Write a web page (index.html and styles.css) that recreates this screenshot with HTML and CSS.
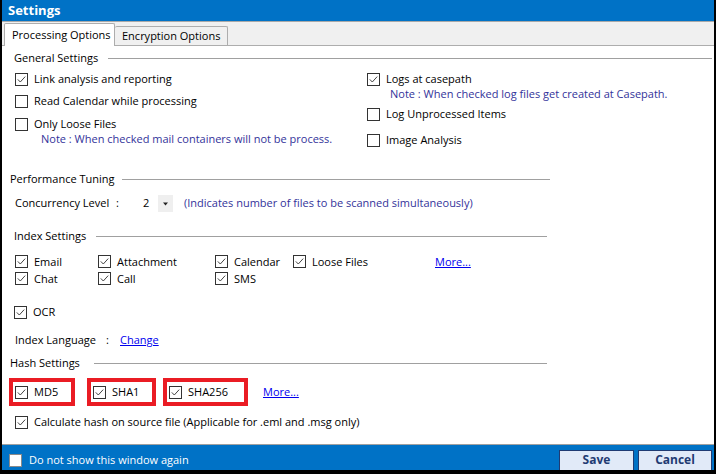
FILE: index.html
```html
<!DOCTYPE html>
<html>
<head>
<meta charset="utf-8">
<link rel="stylesheet" href="styles.css">
</head>
<body>
<div class="window">
  <div class="titlebar">Settings</div>
  <div class="tabs">
    <div class="tab active">Processing Options</div>
    <div class="tab">Encryption Options</div>
  </div>
  <div class="content">
    <div class="legend legend-general"><span>General Settings</span><i class="rule"></i></div>
    <div class="general">
      <div class="col col-left">
        <div class="row r1"><svg class="cb" viewBox="0 0 13 13"><rect x="0.5" y="0.5" width="12" height="12" fill="#fff" stroke="#333"/><path d="M2.8 6.4 L5.3 9 L10.2 3.6" fill="none" stroke="#444" stroke-width="1"/></svg><span>Link analysis and reporting</span></div>
        <div class="row r2"><svg class="cb" viewBox="0 0 13 13"><rect x="0.5" y="0.5" width="12" height="12" fill="#fff" stroke="#333"/></svg><span>Read Calendar while processing</span></div>
        <div class="row r3"><svg class="cb" viewBox="0 0 13 13"><rect x="0.5" y="0.5" width="12" height="12" fill="#fff" stroke="#333"/></svg><span>Only Loose Files</span></div>
        <div class="note note-left">Note : When checked mail containers will not be process.</div>
      </div>
      <div class="col col-right">
        <div class="row r1"><svg class="cb" viewBox="0 0 13 13"><rect x="0.5" y="0.5" width="12" height="12" fill="#fff" stroke="#333"/><path d="M2.8 6.4 L5.3 9 L10.2 3.6" fill="none" stroke="#444" stroke-width="1"/></svg><span>Logs at casepath</span></div>
        <div class="note note-right">Note : When checked log files get created at Casepath.</div>
        <div class="row rr2"><svg class="cb" viewBox="0 0 13 13"><rect x="0.5" y="0.5" width="12" height="12" fill="#fff" stroke="#333"/></svg><span>Log Unprocessed Items</span></div>
        <div class="row rr3"><svg class="cb" viewBox="0 0 13 13"><rect x="0.5" y="0.5" width="12" height="12" fill="#fff" stroke="#333"/></svg><span>Image Analysis</span></div>
      </div>
    </div>

    <div class="legend legend-perf short"><span>Performance Tuning</span><i class="rule"></i></div>
    <div class="row concurrency">
      <span class="cc-label">Concurrency Level</span><span class="cc-colon">:</span>
      <span class="cc-value">2</span>
      <span class="dropdown"><svg viewBox="0 0 15 17" width="15" height="17"><path d="M5 7.5 L10 7.5 L7.5 10.5 Z" fill="#222"/></svg></span>
      <span class="hint">(Indicates number of files to be scanned simultaneously)</span>
    </div>

    <div class="legend legend-index short"><span>Index Settings</span><i class="rule"></i></div>
    <div class="index-grid">
      <div class="row"><svg class="cb" viewBox="0 0 13 13"><rect x="0.5" y="0.5" width="12" height="12" fill="#fff" stroke="#333"/><path d="M2.8 6.4 L5.3 9 L10.2 3.6" fill="none" stroke="#444" stroke-width="1"/></svg><span>Email</span></div>
      <div class="row"><svg class="cb" viewBox="0 0 13 13"><rect x="0.5" y="0.5" width="12" height="12" fill="#fff" stroke="#333"/><path d="M2.8 6.4 L5.3 9 L10.2 3.6" fill="none" stroke="#444" stroke-width="1"/></svg><span>Attachment</span></div>
      <div class="row"><svg class="cb" viewBox="0 0 13 13"><rect x="0.5" y="0.5" width="12" height="12" fill="#fff" stroke="#333"/><path d="M2.8 6.4 L5.3 9 L10.2 3.6" fill="none" stroke="#444" stroke-width="1"/></svg><span>Calendar</span></div>
      <div class="row"><svg class="cb" viewBox="0 0 13 13"><rect x="0.5" y="0.5" width="12" height="12" fill="#fff" stroke="#333"/><path d="M2.8 6.4 L5.3 9 L10.2 3.6" fill="none" stroke="#444" stroke-width="1"/></svg><span>Loose Files</span></div>
      <div class="row"><a class="link" href="#">More...</a></div>
      <div class="row"><svg class="cb" viewBox="0 0 13 13"><rect x="0.5" y="0.5" width="12" height="12" fill="#fff" stroke="#333"/><path d="M2.8 6.4 L5.3 9 L10.2 3.6" fill="none" stroke="#444" stroke-width="1"/></svg><span>Chat</span></div>
      <div class="row"><svg class="cb" viewBox="0 0 13 13"><rect x="0.5" y="0.5" width="12" height="12" fill="#fff" stroke="#333"/><path d="M2.8 6.4 L5.3 9 L10.2 3.6" fill="none" stroke="#444" stroke-width="1"/></svg><span>Call</span></div>
      <div class="row"><svg class="cb" viewBox="0 0 13 13"><rect x="0.5" y="0.5" width="12" height="12" fill="#fff" stroke="#333"/><path d="M2.8 6.4 L5.3 9 L10.2 3.6" fill="none" stroke="#444" stroke-width="1"/></svg><span>SMS</span></div>
    </div>
    <div class="row ocr"><svg class="cb" viewBox="0 0 13 13"><rect x="0.5" y="0.5" width="12" height="12" fill="#fff" stroke="#333"/><path d="M2.8 6.4 L5.3 9 L10.2 3.6" fill="none" stroke="#444" stroke-width="1"/></svg><span>OCR</span></div>
    <div class="row lang">
      <span class="lang-label">Index Language</span><span class="lang-colon">:</span><a class="link" href="#">Change</a>
    </div>

    <div class="legend legend-hash short"><span>Hash Settings</span><i class="rule"></i></div>
    <div class="hash-row">
      <div class="redbox rb1"><div class="row"><svg class="cb" viewBox="0 0 13 13"><rect x="0.5" y="0.5" width="12" height="12" fill="#fff" stroke="#333"/><path d="M2.8 6.4 L5.3 9 L10.2 3.6" fill="none" stroke="#444" stroke-width="1"/></svg><span>MD5</span></div></div>
      <div class="redbox rb2"><div class="row"><svg class="cb" viewBox="0 0 13 13"><rect x="0.5" y="0.5" width="12" height="12" fill="#fff" stroke="#333"/><path d="M2.8 6.4 L5.3 9 L10.2 3.6" fill="none" stroke="#444" stroke-width="1"/></svg><span>SHA1</span></div></div>
      <div class="redbox rb3"><div class="row"><svg class="cb" viewBox="0 0 13 13"><rect x="0.5" y="0.5" width="12" height="12" fill="#fff" stroke="#333"/><path d="M2.8 6.4 L5.3 9 L10.2 3.6" fill="none" stroke="#444" stroke-width="1"/></svg><span>SHA256</span></div></div>
      <a class="link hash-more" href="#">More...</a>
    </div>
    <div class="row calc"><svg class="cb" viewBox="0 0 13 13"><rect x="0.5" y="0.5" width="12" height="12" fill="#fff" stroke="#333"/><path d="M2.8 6.4 L5.3 9 L10.2 3.6" fill="none" stroke="#444" stroke-width="1"/></svg><span>Calculate hash on source file (Applicable for .eml and .msg only)</span></div>
  </div>
  <div class="footer">
    <div class="footer-check"><span class="fcb"></span><span>Do not show this window again</span></div>
    <div class="buttons">
      <button class="btn">Save</button>
      <button class="btn">Cancel</button>
    </div>
  </div>
</div>
</body>
</html>
```
FILE: styles.css
```css
* { box-sizing: border-box; }
html, body { margin: 0; padding: 0; background: #000; }
body {
  font-family: "Open Sans", "Noto Sans", sans-serif;
  font-size: 11px;
  line-height: 14px;
  color: #000;
}
.window {
  width: 716px;
  height: 474px;
  border-left: 2px solid #000;
  border-right: 2px solid #000;
  border-bottom: 4px solid #000;
  background: #fff;
  display: flex;
  flex-direction: column;
  overflow: hidden;
}
.titlebar {
  height: 21px;
  background: #0072c6;
  color: #fff;
  font-weight: 700;
  font-size: 13px;
  line-height: 21px;
  padding-left: 6px;
}
.tabs {
  height: 25px;
  background: #f0f0f0;
  border-top: 1px solid #a9a9a9;
  border-bottom: 1px solid #adadad;
  display: flex;
  align-items: flex-end;
  padding-left: 2px;
}
.tab {
  height: 19px;
  padding: 0 0 0 7px;
  border: 1px solid #adadad;
  border-bottom: none;
  border-radius: 2px 2px 0 0;
  background: #f0f0f0;
  line-height: 17px;
  color: #000;
  white-space: nowrap;
}
.tab.active {
  height: 23px;
  margin-bottom: -1px;
  background: #fff;
  width: 111px;
  padding: 0 0 0 7px;
  line-height: 22px;
}
.tab:not(.active) { width: 113px; border-left: none; }

.content {
  flex: 1;
  padding-left: 13px;
  border-bottom: 1px solid #a0a0a0;
}
.legend {
  display: flex;
  align-items: center;
  height: 14px;
  margin-left: -1px;
}
.legend .rule {
  flex: 1;
  height: 1px;
  background: #a0a0a0;
  margin-left: 10px;
  margin-right: 2px;
}
.legend.short .rule { flex: none; }
.legend-general { margin-top: 5px; }
.legend-perf { margin-top: 22px; margin-left: -5px; }
.legend-perf .rule { width: 428px; margin-left: 7px; }
.legend-index { margin-top: 17px; }
.legend-index .rule { width: 451px; margin-left: 10px; }
.legend-hash { margin-top: 7px; margin-left: -5px; }
.legend-hash .rule { width: 453px; margin-left: 14px; }

.row {
  display: flex;
  align-items: center;
  height: 18px;
  gap: 6px;
  white-space: nowrap;
}
.cb { width: 13px; height: 13px; flex: none; display: block; }

.general {
  display: flex;
  height: 80px;
  margin-top: 5px;
}
.col { display: flex; flex-direction: column; }
.col-left { width: 352px; }
.r2 { margin-top: 4px; }
.r3 { margin-top: 5px; }
.note { color: #33339a; height: 14px; white-space: nowrap; }
.note-left { margin-top: -1px; padding-left: 26px; }
.note-right { margin-top: -1px; padding-left: 23px; }
.rr2 { margin-top: 4px; }
.rr3 { margin-top: 8px; }

.concurrency { margin-top: 8px; gap: 0; }
.cc-label { width: 101px; }
.cc-colon { width: 27px; }
.cc-value { width: 15px; }
.dropdown {
  width: 15px;
  height: 17px;
  background: #efefef;
  display: block;
}
.dropdown svg { display: block; }
.hint { margin-left: 11px; color: #33339a; }

.index-grid {
  display: grid;
  grid-template-columns: 83px 117px 78px 142px 80px;
  grid-auto-rows: 17px;
  margin-top: 10px;
}
.index-grid .row { height: 17px; }
.ocr { margin-top: 16px; margin-left: -1px; }
.lang { margin-top: 10px; gap: 0; }
.lang-label { width: 91px; }
.lang-colon { width: 14px; }

.link { color: #0000ee; text-decoration: underline; }

.hash-row {
  display: flex;
  align-items: center;
  margin-top: 8px;
  margin-left: -6px;
  height: 28px;
}
.redbox {
  height: 28px;
  border: 4px solid #ea1c24;
  display: flex;
  align-items: center;
  padding-left: 2px;
}
.rb1 { width: 66px; }
.rb2 { width: 69px; margin-left: 12px; }
.rb3 { width: 85px; margin-left: 7px; }
.hash-more { margin-left: 15px; }
.calc { margin-top: 7px; }

.footer {
  height: 25px;
  background: #0072c6;
  display: flex;
  align-items: flex-start;
  justify-content: space-between;
  color: #fff;
  overflow: hidden;
}
.footer-check {
  display: flex;
  align-items: center;
  gap: 7px;
  padding-left: 7px;
  height: 22px;
  margin-top: 4px;
}
.fcb {
  width: 13px;
  height: 13px;
  background: #fff;
  border: 1px solid #8a8a8a;
  display: block;
}
.buttons {
  display: flex;
  gap: 4px;
  padding-top: 5px;
  padding-right: 2px;
}
.btn {
  width: 75px;
  height: 26px;
  background: #e1eaf8;
  border: 1px solid #1f3b73;
  color: #1f3b73;
  font-family: "Open Sans", "Noto Sans", sans-serif;
  font-weight: 700;
  font-size: 12px;
  padding: 0 0 6px 0;
  line-height: 18px;
}
.btn + .btn { width: 74px; }
```
